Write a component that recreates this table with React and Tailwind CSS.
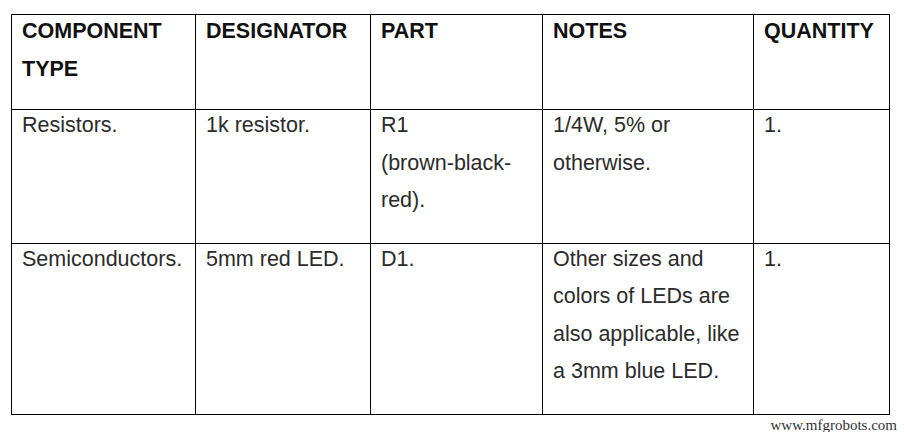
// parts list table
const headers = ["COMPONENT TYPE", "DESIGNATOR", "PART", "NOTES", "QUANTITY"];

const rows = [
  [
    "Resistors.",
    "1k resistor.",
    <>
      R1
      <br />
      (brown-black-red).
    </>,
    "1/4W, 5% or otherwise.",
    "1.",
  ],
  [
    "Semiconductors.",
    "5mm red LED.",
    "D1.",
    "Other sizes and colors of LEDs are also applicable, like a 3mm blue LED.",
    "1.",
  ],
];

const widths = ["w-[184px]", "w-[175px]", "w-[172px]", "w-[211px]", "w-[136px]"];

const App = () => {
  return (
    <div className="w-[904px] h-[432px] bg-white pt-[14px] pl-[11px] font-['Liberation_Sans',Arial,sans-serif]">
      <table className="table-fixed border-collapse w-[878px]">
        <colgroup>
          {widths.map((w, i) => (
            <col key={i} className={w} />
          ))}
        </colgroup>
        <thead>
          <tr>
            {headers.map((h, i) => (
              <th
                key={i}
                className="border border-black align-top text-left font-bold text-[21.5px] leading-[37.5px] text-[#111] pl-[10px] pr-[8px] pt-0 pb-[21px]"
              >
                <div className="-mt-[2px]">{h}</div>
              </th>
            ))}
          </tr>
        </thead>
        <tbody>
          {rows.map((row, r) => (
            <tr key={r}>
              {row.map((cell, i) => (
                <td
                  key={i}
                  className="border border-black align-top text-[21.5px] leading-[37.5px] text-[#2b2b2b] pl-[10px] pr-[8px] pt-0 pb-[23px]"
                >
                  <div className="-mt-[3px]">{cell}</div>
                </td>
              ))}
            </tr>
          ))}
        </tbody>
      </table>
      <div className="w-[886px] flex justify-end">
        <span className="font-['Liberation_Serif',serif] text-[15px] leading-[16px] text-[#333] mt-[2px]">
          www.mfgrobots.com
        </span>
      </div>
    </div>
  );
};

export default App;
